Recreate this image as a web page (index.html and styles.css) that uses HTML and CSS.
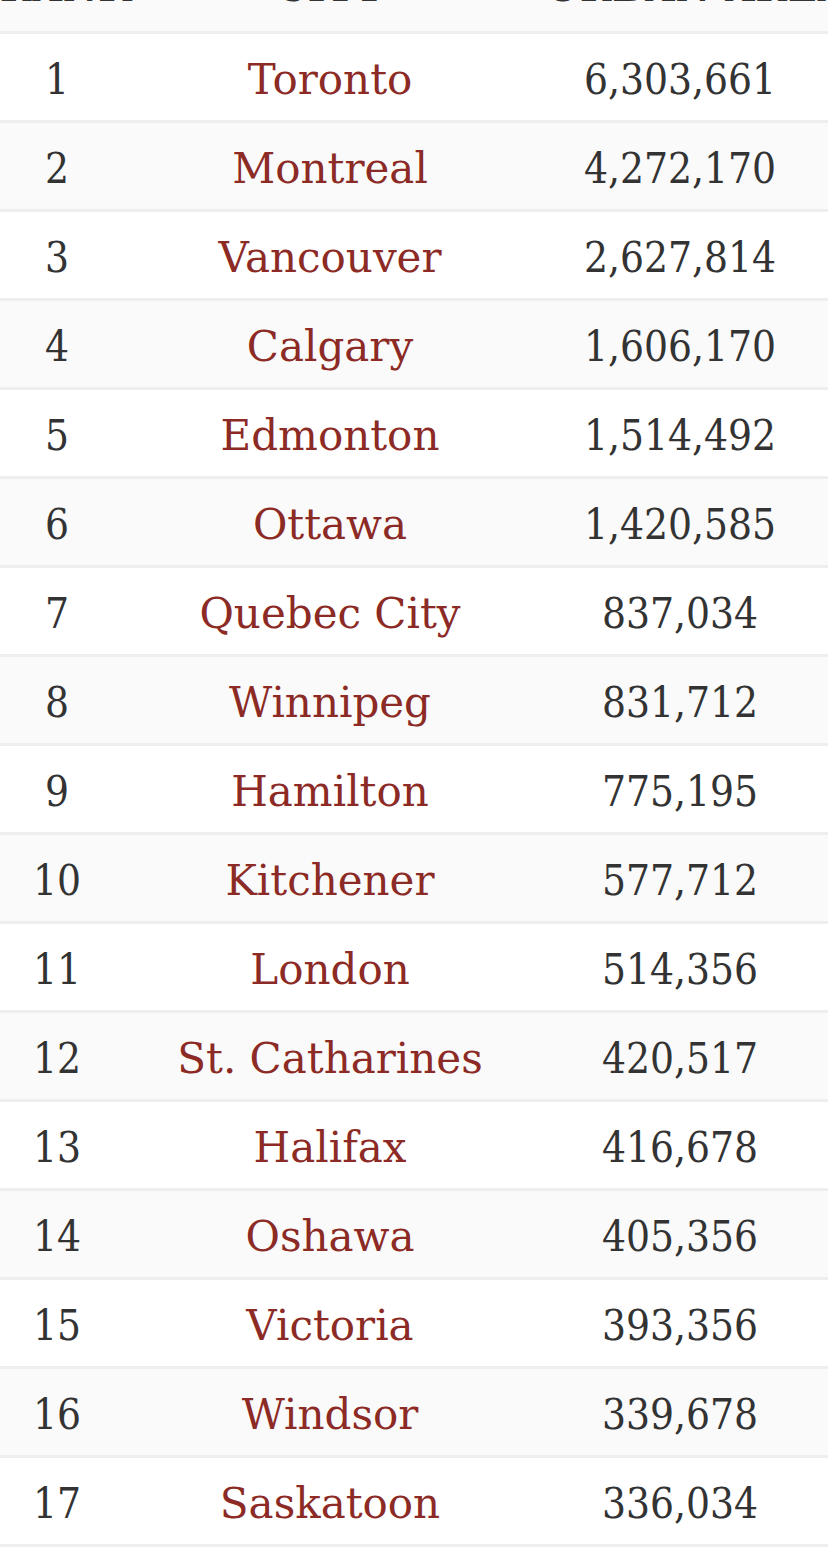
FILE: index.html
```html
<!DOCTYPE html>
<html>
<head>
<meta charset="utf-8">
<link rel="stylesheet" href="styles.css">
</head>
<body>
<div class="table">
  <div class="row head">
    <div class="cell">RANK</div>
    <div class="cell">CITY</div>
    <div class="cell">URBAN AREA</div>
  </div>
  <div class="row"><div class="cell num">1</div><div class="cell city">Toronto</div><div class="cell num">6,303,661</div></div>
  <div class="row"><div class="cell num">2</div><div class="cell city">Montreal</div><div class="cell num">4,272,170</div></div>
  <div class="row"><div class="cell num">3</div><div class="cell city">Vancouver</div><div class="cell num">2,627,814</div></div>
  <div class="row"><div class="cell num">4</div><div class="cell city">Calgary</div><div class="cell num">1,606,170</div></div>
  <div class="row"><div class="cell num">5</div><div class="cell city">Edmonton</div><div class="cell num">1,514,492</div></div>
  <div class="row"><div class="cell num">6</div><div class="cell city">Ottawa</div><div class="cell num">1,420,585</div></div>
  <div class="row"><div class="cell num">7</div><div class="cell city">Quebec City</div><div class="cell num">837,034</div></div>
  <div class="row"><div class="cell num">8</div><div class="cell city">Winnipeg</div><div class="cell num">831,712</div></div>
  <div class="row"><div class="cell num">9</div><div class="cell city">Hamilton</div><div class="cell num">775,195</div></div>
  <div class="row"><div class="cell num">10</div><div class="cell city">Kitchener</div><div class="cell num">577,712</div></div>
  <div class="row"><div class="cell num">11</div><div class="cell city">London</div><div class="cell num">514,356</div></div>
  <div class="row"><div class="cell num">12</div><div class="cell city">St. Catharines</div><div class="cell num">420,517</div></div>
  <div class="row"><div class="cell num">13</div><div class="cell city">Halifax</div><div class="cell num">416,678</div></div>
  <div class="row"><div class="cell num">14</div><div class="cell city">Oshawa</div><div class="cell num">405,356</div></div>
  <div class="row"><div class="cell num">15</div><div class="cell city">Victoria</div><div class="cell num">393,356</div></div>
  <div class="row"><div class="cell num">16</div><div class="cell city">Windsor</div><div class="cell num">339,678</div></div>
  <div class="row"><div class="cell num">17</div><div class="cell city">Saskatoon</div><div class="cell num">336,034</div></div>
</div>
</body>
</html>
```

FILE: styles.css
```css
html, body {
  margin: 0;
  padding: 0;
  background: #ffffff;
}
body {
  width: 828px;
  height: 1560px;
  overflow: hidden;
  font-family: "DejaVu Serif", "Liberation Serif", serif;
  color: #333333;
}
.table {
  margin-top: -55px;
  display: flex;
  flex-direction: column;
}
.row {
  display: grid;
  grid-template-columns: 114px 432px 268px;
  padding-right: 14px;
  height: 86px;
  border-bottom: 3px solid #eeeeee;
  align-items: center;
  background: #ffffff;
}
.row:nth-child(odd) {
  background: #fafafa;
}
.cell {
  text-align: center;
  font-size: 42px;
  line-height: 50px;
  white-space: nowrap;
}
.num {
  font-family: "DejaVu Serif Condensed", "DejaVu Serif", serif;
  font-stretch: condensed;
  color: #333333;
  padding-top: 6px;
}
.city {
  color: #8c2a25;
  padding-top: 6px;
}
.head .cell {
  font-family: "DejaVu Serif Condensed", "DejaVu Serif", serif;
  font-weight: bold;
  color: #333333;
  letter-spacing: 1px;
  padding-bottom: 2px;
}
```
